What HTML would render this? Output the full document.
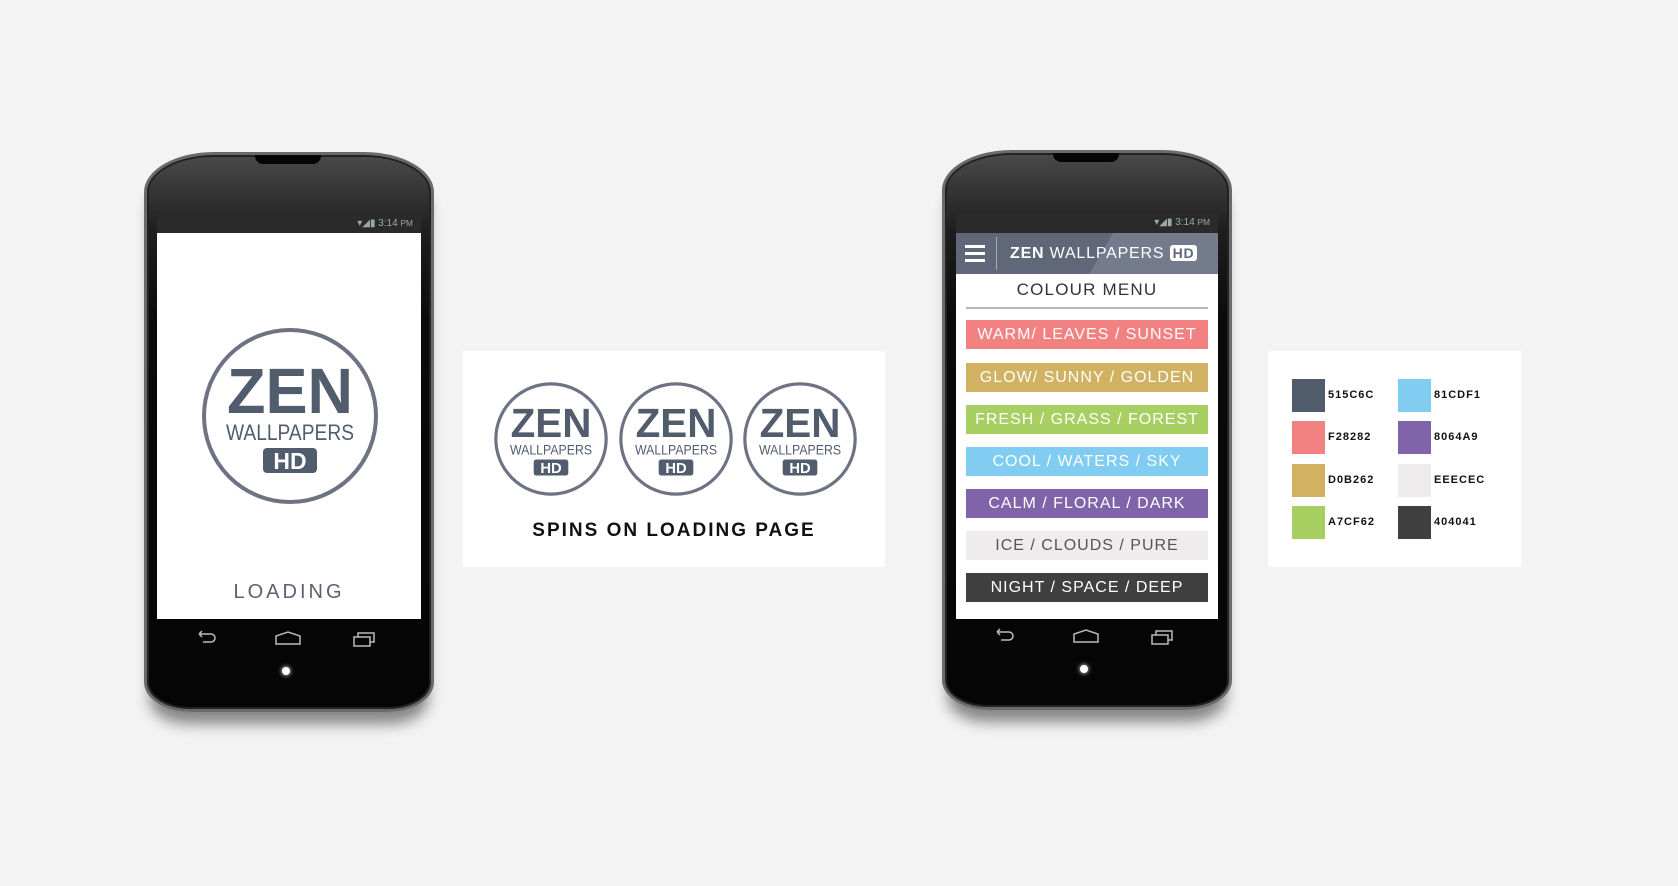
<!DOCTYPE html>
<html><head><meta charset="utf-8"><style>
*{margin:0;padding:0;box-sizing:border-box}
body{width:1678px;height:886px;background:#f3f3f3;position:relative;overflow:hidden;font-family:"Liberation Sans",sans-serif}
.abs{position:absolute}
.phone{position:absolute;border-radius:70px 70px 46px 46px/40px 40px 30px 30px;background:linear-gradient(#4a4a4a 0%,#1e1e1e 14%,#0a0a0a 30%,#050505 100%);border:3px solid #6a6a6a;box-shadow:0 18px 14px -6px rgba(0,0,0,.45),inset 0 0 0 2px #222}
.notch{position:absolute;height:9px;background:#050505;border-radius:0 0 8px 8px}
.status{position:absolute;background:#2a2a2a;color:#9aa;font-size:10px;text-align:right;padding-right:8px;line-height:18px}
.screen{position:absolute;background:#fff}
.btn{position:absolute;left:966px;width:242px;height:29px;color:#fff;font-size:16px;letter-spacing:1px;text-align:center;line-height:29px;white-space:nowrap;overflow:hidden}
.sw{position:absolute;width:33px;height:33px}
.lbl{position:absolute;font-size:11px;font-weight:bold;letter-spacing:1px;color:#111}
</style></head><body>

<!-- left phone -->
<div class="phone" style="left:144px;top:152px;width:290px;height:560px"></div>
<div class="notch" style="left:255px;top:155px;width:66px"></div>
<div class="status" style="left:157px;top:214px;width:264px;height:19px">▾◢▮ 3:14 <small>PM</small></div>
<div class="screen" style="left:157px;top:233px;width:264px;height:386px"></div>
<svg class="abs" style="left:198px;top:324px" width="184" height="184" viewBox="-92 -92 184 184">
<circle r="86" fill="none" stroke="#6d7382" stroke-width="4"/>
<text x="0" y="-3" text-anchor="middle" font-family="Liberation Sans" font-weight="bold" font-size="64" fill="#515c6c" textLength="126" lengthAdjust="spacingAndGlyphs">ZEN</text>
<text x="0" y="24" text-anchor="middle" font-family="Liberation Sans" font-size="22" fill="#515c6c" textLength="128" lengthAdjust="spacingAndGlyphs">WALLPAPERS</text>
<rect x="-27" y="32" width="54" height="25" rx="4" fill="#515c6c"/>
<text x="0" y="53" text-anchor="middle" font-family="Liberation Sans" font-weight="bold" font-size="23" fill="#fff">HD</text>
</svg>
<div class="abs" style="left:157px;top:581px;width:264px;text-align:center;font-size:20px;letter-spacing:3px;color:#5a6272">LOADING</div>
<svg class="abs" style="left:195px;top:628px" width="190" height="20" fill="none" stroke="#bbb" stroke-width="1.5">
<path d="M4 6h12a4 4 0 0 1 0 8H8M4 6l3-3M4 6l3 3"/>
<path d="M81 16V8l12-4 12 4v8z"/>
<path d="M159 9h16v9h-16zM163 9V5h16v9h-4"/>
</svg>
<div class="abs" style="left:282px;top:667px;width:8px;height:8px;border-radius:50%;background:#fff;box-shadow:0 0 5px #fff"></div>

<!-- middle card -->
<div class="abs" style="left:463px;top:351px;width:422px;height:216px;background:#fff"></div>
<svg class="abs" style="left:492px;top:380px" width="118" height="118" viewBox="-92 -92 184 184">
<circle r="86" fill="none" stroke="#6d7382" stroke-width="5"/>
<text x="0" y="-3" text-anchor="middle" font-family="Liberation Sans" font-weight="bold" font-size="64" fill="#515c6c" textLength="126" lengthAdjust="spacingAndGlyphs">ZEN</text>
<text x="0" y="24" text-anchor="middle" font-family="Liberation Sans" font-size="22" fill="#515c6c" textLength="128" lengthAdjust="spacingAndGlyphs">WALLPAPERS</text>
<rect x="-27" y="32" width="54" height="25" rx="4" fill="#515c6c"/>
<text x="0" y="53" text-anchor="middle" font-family="Liberation Sans" font-weight="bold" font-size="23" fill="#fff">HD</text>
</svg>
<svg class="abs" style="left:617px;top:380px" width="118" height="118" viewBox="-92 -92 184 184">
<circle r="86" fill="none" stroke="#6d7382" stroke-width="5"/>
<text x="0" y="-3" text-anchor="middle" font-family="Liberation Sans" font-weight="bold" font-size="64" fill="#515c6c" textLength="126" lengthAdjust="spacingAndGlyphs">ZEN</text>
<text x="0" y="24" text-anchor="middle" font-family="Liberation Sans" font-size="22" fill="#515c6c" textLength="128" lengthAdjust="spacingAndGlyphs">WALLPAPERS</text>
<rect x="-27" y="32" width="54" height="25" rx="4" fill="#515c6c"/>
<text x="0" y="53" text-anchor="middle" font-family="Liberation Sans" font-weight="bold" font-size="23" fill="#fff">HD</text>
</svg>
<svg class="abs" style="left:741px;top:380px" width="118" height="118" viewBox="-92 -92 184 184">
<circle r="86" fill="none" stroke="#6d7382" stroke-width="5"/>
<text x="0" y="-3" text-anchor="middle" font-family="Liberation Sans" font-weight="bold" font-size="64" fill="#515c6c" textLength="126" lengthAdjust="spacingAndGlyphs">ZEN</text>
<text x="0" y="24" text-anchor="middle" font-family="Liberation Sans" font-size="22" fill="#515c6c" textLength="128" lengthAdjust="spacingAndGlyphs">WALLPAPERS</text>
<rect x="-27" y="32" width="54" height="25" rx="4" fill="#515c6c"/>
<text x="0" y="53" text-anchor="middle" font-family="Liberation Sans" font-weight="bold" font-size="23" fill="#fff">HD</text>
</svg>
<div class="abs" style="left:463px;top:520px;width:422px;text-align:center;font-size:19px;font-weight:bold;letter-spacing:2px;color:#111">SPINS ON LOADING PAGE</div>

<!-- right phone -->
<div class="phone" style="left:942px;top:150px;width:290px;height:560px"></div>
<div class="notch" style="left:1053px;top:153px;width:66px"></div>
<div class="status" style="left:956px;top:213px;width:262px;height:20px">▾◢▮ 3:14 <small>PM</small></div>
<div class="screen" style="left:956px;top:233px;width:262px;height:386px"></div>
<div class="abs" style="left:956px;top:233px;width:262px;height:41px;background:linear-gradient(120deg,#5f6778 0%,#5f6778 55%,#737b8c 55%,#737b8c 100%)"></div>
<div class="abs" style="left:965px;top:245px;width:20px;height:3px;background:#fff;box-shadow:0 7px 0 #fff,0 14px 0 #fff"></div>
<div class="abs" style="left:996px;top:237px;width:1px;height:33px;background:#aab"></div>
<div class="abs" style="left:1010px;top:243px;font-size:16px;color:#fff;letter-spacing:0.8px;line-height:20px;white-space:nowrap"><b>ZEN</b> WALLPAPERS <span style="background:#fff;color:#5f6778;font-weight:bold;border-radius:3px;padding:0 3px;font-size:14px">HD</span></div>
<div class="abs" style="left:956px;top:280px;width:262px;text-align:center;font-size:17px;letter-spacing:1.2px;color:#333">COLOUR MENU</div>
<div class="abs" style="left:966px;top:307px;width:242px;height:2px;background:#b5b8c0"></div>
<div class="btn" style="top:320px;background:#f28282">WARM/ LEAVES / SUNSET</div>
<div class="btn" style="top:363px;background:#d0b262">GLOW/ SUNNY / GOLDEN</div>
<div class="btn" style="top:405px;background:#a7cf62">FRESH / GRASS / FOREST</div>
<div class="btn" style="top:447px;background:#81cdf1">COOL / WATERS / SKY</div>
<div class="btn" style="top:489px;background:#8064a9">CALM / FLORAL / DARK</div>
<div class="btn" style="top:531px;background:#eeecec;color:#555">ICE / CLOUDS / PURE</div>
<div class="btn" style="top:573px;background:#404041">NIGHT / SPACE / DEEP</div>
<svg class="abs" style="left:993px;top:626px" width="190" height="20" fill="none" stroke="#bbb" stroke-width="1.5">
<path d="M4 6h12a4 4 0 0 1 0 8H8M4 6l3-3M4 6l3 3"/>
<path d="M81 16V8l12-4 12 4v8z"/>
<path d="M159 9h16v9h-16zM163 9V5h16v9h-4"/>
</svg>
<div class="abs" style="left:1080px;top:665px;width:8px;height:8px;border-radius:50%;background:#fff;box-shadow:0 0 5px #fff"></div>

<!-- palette card -->
<div class="abs" style="left:1268px;top:351px;width:253px;height:216px;background:#fff"></div>
<div class="sw" style="left:1292px;top:379px;background:#515c6c"></div><div class="lbl" style="left:1328px;top:389px">515C6C</div>
<div class="sw" style="left:1398px;top:379px;background:#81cdf1"></div><div class="lbl" style="left:1434px;top:389px">81CDF1</div>
<div class="sw" style="left:1292px;top:421px;background:#f28282"></div><div class="lbl" style="left:1328px;top:431px">F28282</div>
<div class="sw" style="left:1398px;top:421px;background:#8064a9"></div><div class="lbl" style="left:1434px;top:431px">8064A9</div>
<div class="sw" style="left:1292px;top:464px;background:#d0b262"></div><div class="lbl" style="left:1328px;top:474px">D0B262</div>
<div class="sw" style="left:1398px;top:464px;background:#eeecec"></div><div class="lbl" style="left:1434px;top:474px">EEECEC</div>
<div class="sw" style="left:1292px;top:506px;background:#a7cf62"></div><div class="lbl" style="left:1328px;top:516px">A7CF62</div>
<div class="sw" style="left:1398px;top:506px;background:#404041"></div><div class="lbl" style="left:1434px;top:516px">404041</div>
</body></html>
